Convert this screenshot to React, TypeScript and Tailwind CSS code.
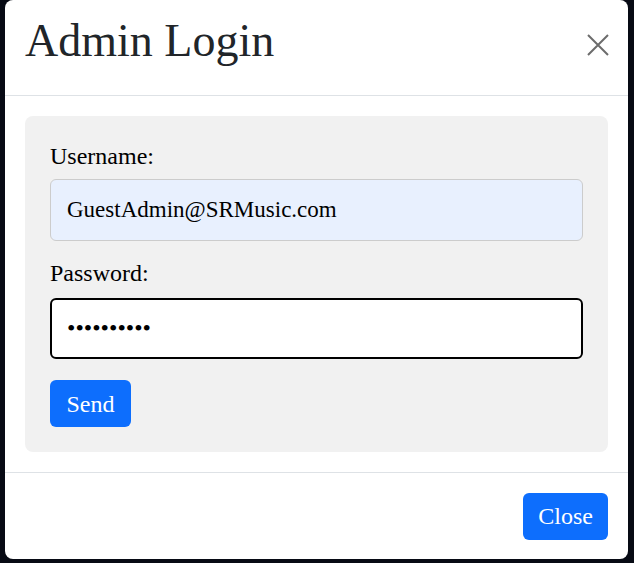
import React from 'react';

const serif = { fontFamily: '"Liberation Serif", "Times New Roman", serif' };

function CloseIcon() {
  return (
    <svg width="22" height="22" viewBox="0 0 22 22" fill="none">
      <path d="M1 1L21 21M21 1L1 21" stroke="#6c6c6c" strokeWidth="2" />
    </svg>
  );
}

export default function App() {
  return (
    <div className="h-[563px] w-[634px] overflow-hidden bg-[#070a14] pl-[5px]" style={serif}>
      <div className="flex h-[559px] w-[623px] flex-col rounded-[8px] bg-white">
        {/* Header */}
        <div className="flex h-[96px] items-center justify-between border-b border-[#dee2e6] pl-[20px] pr-[19px]">
          <h1 className="pb-[14px] text-[46px] leading-none text-[#212529]">Admin Login</h1>
          <button className="mt-[-5px]">
            <CloseIcon />
          </button>
        </div>

        {/* Body */}
        <div className="p-[20px]">
          <div className="rounded-[8px] bg-[#f1f1f1] px-[25px] pt-[26px] pb-[25px]">
            <label className="block text-[24px] leading-[28px] text-black">Username:</label>
            <input
              readOnly
              value="GuestAdmin@SRMusic.com"
              className="mt-[9px] block h-[62px] w-full rounded-[6px] border border-[#cccccc] bg-[#e8f0fe] pl-[16px] text-[23px] text-black outline-none"
              style={serif}
            />
            <label className="mt-[18px] block text-[24px] leading-[28px] text-black">Password:</label>
            <input
              readOnly
              type="password"
              value="passwords1"
              className="mt-[11px] block h-[61px] w-full rounded-[6px] border-2 border-black bg-white pl-[15px] text-[24px] text-black outline-none"
              style={serif}
            />
            <button className="mt-[21px] h-[47px] w-[81px] rounded-[6px] bg-[#0d6efd] text-[24px] text-white">
              Send
            </button>
          </div>
        </div>

        {/* Footer */}
        <div className="flex flex-1 items-center justify-end border-t border-[#dee2e6] pr-[20px]">
          <button className="h-[47px] rounded-[6px] bg-[#0d6efd] px-[15px] text-[24px] text-white">
            Close
          </button>
        </div>
      </div>
    </div>
  );
}
